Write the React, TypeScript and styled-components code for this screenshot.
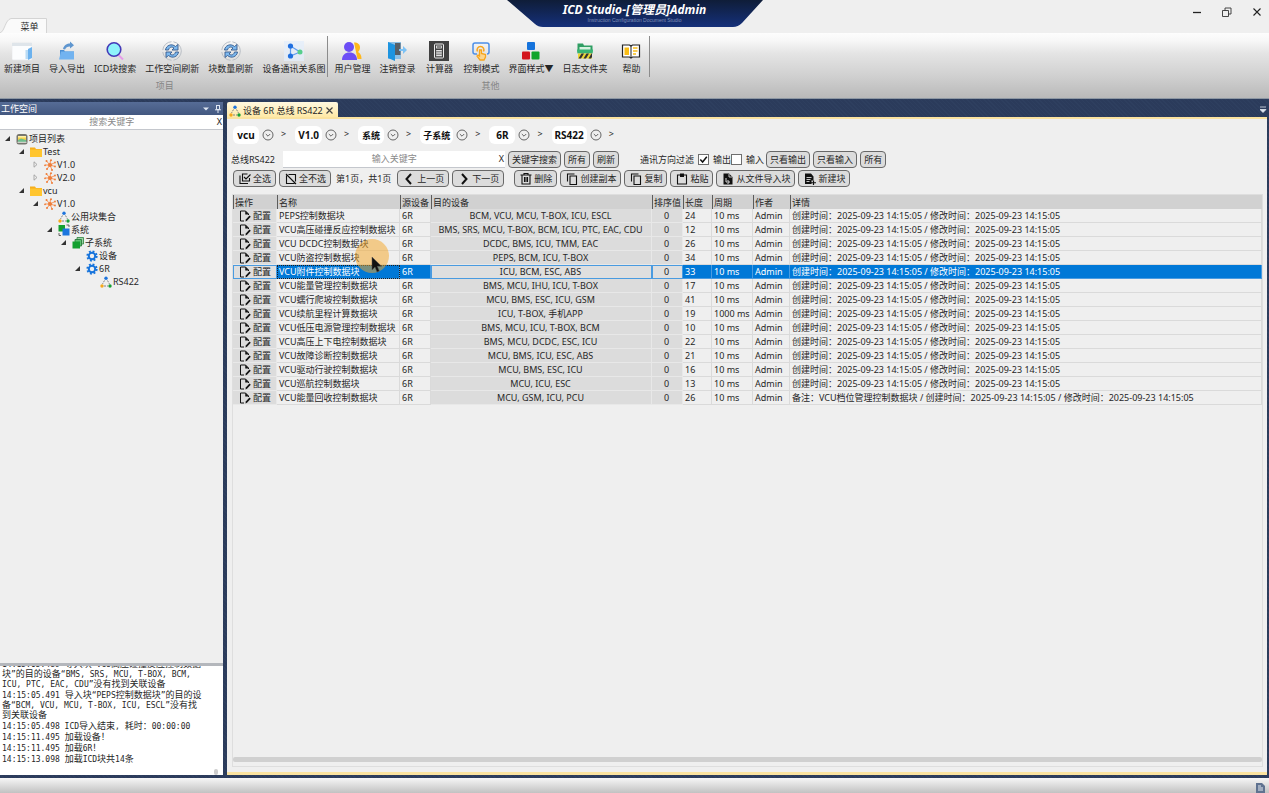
import React from 'react';
import styled, { createGlobalStyle, css } from 'styled-components';

const Global = createGlobalStyle`
  *, *::before, *::after { box-sizing: border-box; }
  body { margin: 0; }
  body, button, input, table {
    font-family: "Noto Sans", "Noto Sans CJK SC", sans-serif;
    font-size: 9px;
    line-height: 12px;
    color: #262626;
  }
  button { cursor: pointer; }
  svg { display: block; flex: none; }
`;

const Window = styled.div`
  display: flex;
  flex-direction: column;
  height: 100vh;
  overflow: hidden;
  white-space: nowrap;
  background: #2b3b5b;
`;

const PlainButton = styled.button`
  display: flex;
  align-items: center;
  justify-content: center;
  padding: 0;
  border: 0;
  background: none;
`;

/* Title bar */

const TitleBar = styled.header`
  display: grid;
  grid-template-columns: 1fr 256px 1fr;
  height: 33px;
  background: #efefef;
`;

const MenuTabs = styled.nav`
  display: flex;
  align-items: flex-end;
`;

const MenuTab = styled.button`
  position: relative;
  width: 47px;
  height: 15px;
  padding: 2px 0 0 12px;
  border: 0;
  background: none;
  svg { position: absolute; inset: 0; }
  span { position: relative; }
`;

const Banner = styled.div`
  position: relative;
  height: 28px;
  text-align: center;
  svg { position: absolute; inset: 0; }
`;

const BannerText = styled.div`
  position: relative;
  padding-top: 3px;
`;

const AppName = styled.h1`
  margin: 0;
  font-size: 12px;
  line-height: 14px;
  font-weight: 700;
  font-style: italic;
  color: #fff;
`;

const AppSubtitle = styled.p`
  margin: 0;
  font-family: "Liberation Sans", sans-serif;
  font-size: 5px;
  line-height: 6px;
  color: #7f8fb8;
`;

const WindowControls = styled.div`
  display: flex;
  justify-content: flex-end;
  gap: 10px;
  padding: 2px 2px 0 0;
  ${PlainButton} { width: 20px; height: 20px; }
`;

/* Ribbon */

const Ribbon = styled.div`
  display: flex;
  height: 66px;
  flex: none;
  border-bottom: 1px solid #8d97a3;
  background: linear-gradient(#fdfdfd 0, #f7f7f7 12%, #e4e4e4 32%, #cfcfcf 68%, #b9b9b9 100%);
`;

const RibbonGroup = styled.section`
  position: relative;
  display: flex;
  flex-direction: column;
  padding: 8px 3px 0 4px;
  & + & { padding-left: 6px; padding-right: 4px; }
  &::after {
    content: '';
    position: absolute;
    right: 0;
    top: 3px;
    height: 41px;
    width: 1px;
    background: #8c8c8c;
  }
`;

const RibbonItems = styled.div`
  display: flex;
  gap: 9px;
`;

const RibbonButton = styled(PlainButton)`
  flex-direction: column;
  gap: 2px;
  min-width: 30px;
`;

const GroupTitle = styled.div`
  margin-top: 5px;
  text-align: center;
  color: #858585;
`;

/* Docked layout */

const Dock = styled.div`
  display: flex;
  flex: 1;
  min-height: 0;
  gap: 4px;
  padding: 3px 2px 3px 0;
  background: repeating-linear-gradient(45deg, #2b3b5b 0 2px, #2e3f5f 2px 3px);
`;

const Sidebar = styled.aside`
  display: flex;
  flex-direction: column;
  width: 223px;
  flex: none;
  background: #efefef;
`;

const PanelHeader = styled.div`
  display: flex;
  align-items: center;
  gap: 6px;
  height: 13px;
  padding: 0 2px 0 1px;
  color: #fff;
  background: linear-gradient(#566c96, #435880);
  h2 { flex: 1; margin: 0; font-size: 9px; font-weight: 400; line-height: 12px; }
`;

const SearchBox = styled.div<{ $width?: number }>`
  display: flex;
  height: ${p => (p.$width ? 17 : 15)}px;
  ${p => p.$width && css`width: ${p.$width}px;`}
  padding-right: 1px;
  border-bottom: 1px solid #c4c7cd;
  background: #fff;
`;

const SearchInput = styled.input`
  flex: 1;
  min-width: 0;
  padding: 0 0 0 7px;
  border: 0;
  outline: 0;
  background: transparent;
  text-align: center;
  &::placeholder { color: #8a8a8a; opacity: 1; }
`;

const TreeList = styled.ul`
  flex: 1;
  min-height: 0;
  margin: 0;
  padding: 2px 0 0 4px;
  list-style: none;
  overflow: hidden;
`;

const TreeRow = styled.li<{ $depth: number }>`
  display: flex;
  align-items: center;
  gap: 1px;
  height: 13px;
  padding-left: ${p => p.$depth * 14}px;
`;

const Toggle = styled.span`
  width: 11px;
`;

const LogPanel = styled.div`
  display: flex;
  flex-direction: column;
  justify-content: flex-end;
  gap: 1px;
  position: relative;
  height: 112px;
  padding: 0 20px 10px 2px;
  border-top: 3px solid #b4b7bc;
  overflow: hidden;
  white-space: pre-wrap;
  background: #fff;
`;

const LogEntry = styled.p`
  margin: 0;
  flex: none;
  font-family: "DejaVu Sans Mono", "Noto Sans CJK SC", monospace;
  font-size: 8px;
  line-height: 10px;
`;

const LogThumb = styled.span`
  position: absolute;
  right: 5px;
  bottom: 0;
  width: 4px;
  height: 6px;
  border-radius: 2px;
  background: #cdcdcd;
`;

const CjkRun = styled.span`
  font-size: 9px;
  line-height: 1;
`;

/* Document area */

const DocumentArea = styled.main`
  display: flex;
  flex: 1;
  flex-direction: column;
  min-width: 0;
`;

const DocumentTabs = styled.div`
  display: flex;
  justify-content: space-between;
  height: 15px;
`;

const DocumentTab = styled.div`
  display: flex;
  align-items: center;
  gap: 2px;
  padding: 2px 4px 0 2px;
  border-radius: 2px 2px 0 0;
  background: linear-gradient(#fff8e0, #ffe9a6);
`;

const DocumentBody = styled.div`
  display: flex;
  flex: 1;
  flex-direction: column;
  min-height: 0;
  padding: 6px 4px 5px 4px;
  border: solid #fbe3a0;
  border-width: 2px 0 3px;
  background: #efefef;
`;

const Breadcrumb = styled.nav`
  display: flex;
  align-items: center;
  gap: 9px;
  height: 20px;
  padding-left: 2px;
`;

const CrumbGroup = styled.div`
  display: flex;
  align-items: center;
  gap: 3px;
  ${PlainButton} { width: 12px; height: 12px; }
`;

const Crumb = styled.a`
  min-width: 26px;
  height: 18px;
  padding: 0 3px;
  border-radius: 6px;
  background: #fff;
  color: #111;
  font-size: 10px;
  font-weight: 700;
  line-height: 18px;
  text-align: center;
  text-decoration: none;
`;

const Separator = styled.span`
  padding: 0 0 3px 4px;
`;

const FilterBar = styled.div`
  display: flex;
  align-items: center;
  gap: 3px;
  height: 17px;
  margin-top: 6px;
`;

const FieldLabel = styled.label`
  width: 49px;
`;

const ActionBar = styled(FilterBar)`
  margin-top: 2px;
  padding-left: 2px;
`;

const Button = styled.button<{ $icon?: boolean }>`
  display: flex;
  align-items: center;
  gap: 2px;
  height: 17px;
  padding: ${p => (p.$icon ? '0 4px 0 5px' : '0 3px')};
  border: 1px solid #686868;
  border-radius: 4px;
  background: #dcdcdc;
`;

const CheckGroup = styled.div`
  display: flex;
  align-items: center;
  margin: 0 -1px 0 18px;
`;

const CheckLabel = styled.label`
  display: flex;
  align-items: center;
  gap: 4px;
`;

const CheckBox = styled.input`
  appearance: none;
  width: 11px;
  height: 11px;
  margin: 0;
  border: 1px solid #6f6f6f;
  background: #fff;
  &:checked {
    background: #fff url("data:image/svg+xml,%3Csvg xmlns='http://www.w3.org/2000/svg' viewBox='0 0 9 9'%3E%3Cpath d='M1.3 4.5 3.6 7 7.8 1.8' fill='none' stroke='%23111' stroke-width='1.5'/%3E%3C/svg%3E") center / 9px;
  }
`;

const FilterTitle = styled.span`
  margin-right: 4px;
`;

const PageInfo = styled.span`
  padding: 0 3px 0 2px;
`;

const Spacer = styled.span`
  width: 4px;
`;

const GridFrame = styled.div`
  position: relative;
  display: flex;
  flex: 1;
  flex-direction: column;
  justify-content: space-between;
  min-height: 0;
  margin: 7px 0 0 1px;
  padding-bottom: 4px;
  border: 1px solid #dedede;
`;

const Grid = styled.table`
  width: 100%;
  table-layout: fixed;
  border-collapse: separate;
  border-spacing: 0;
`;

const HeadCell = styled.th`
  height: 14px;
  padding: 0 0 0 1px;
  border-left: 1px solid #5c5c5c;
  background: #d1d1d1;
  font-weight: 400;
  line-height: 13px;
  text-align: left;
`;

const Cell = styled.td<{ $box?: boolean; $center?: boolean }>`
  height: 14px;
  padding: 0 0 0 2px;
  border: solid #dadada;
  border-width: 0 1px 1px 0;
  line-height: 13px;
  overflow: hidden;
  ${p => p.$box && css`background: #dcdcdc; border-color: #e8e8e8;`}
  ${p => p.$center && css`padding: 0 1px 0 0; text-align: center;`}
`;

const GridRow = styled.tr<{ $selected?: boolean }>`
  ${p => p.$selected && css`
    ${Cell} {
      background: #0078d7;
      color: #fff;
      border-color: #4a9be0;
    }
    ${Cell}:nth-child(2) { outline: 1px dotted #1c1c1c; outline-offset: -1px; }
    ${Cell}:nth-child(1), ${Cell}:nth-child(4), ${Cell}:nth-child(5) {
      background: #dfdfdf;
      color: #1c1c1c;
      box-shadow: inset 0 1px #4a9be0, inset 1px 0 #4a9be0;
    }
    ${Cell}:nth-child(1) button { color: #1c1c1c; }
  `}
`;

const ConfigButton = styled(PlainButton)`
  gap: 2px;
  padding-left: 4px;
  line-height: 13px;
`;

const HorizontalBar = styled.div`
  height: 5px;
  border-radius: 2px;
  background: #d0d0d0;
`;

const Pointer = styled.div`
  position: absolute;
  left: 122px;
  top: 43px;
  pointer-events: none;
`;

const StatusBar = styled.footer`
  display: flex;
  align-items: flex-end;
  justify-content: flex-end;
  height: 15px;
  flex: none;
  padding: 0 3px 0 0;
  background: linear-gradient(#f6f6f6, #c2c2c2);
`;

/* Text whose ideographs are set at their own size beside the Latin letters */
const Mixed = ({ text }: { text: string }) => (
  <>
    {text.split(/([\u3000-\u9fff\uff00-\uffef]+)/).map((part, i) =>
      i % 2 ? <CjkRun key={i}>{part}</CjkRun> : part
    )}
  </>
);

/* Ribbon icons, drawn on a 20px square */
const ribbonIcons: Record<string, React.ReactNode> = {
  project: (
    <>
      <rect x="0" y="2" width="20" height="17" rx="1" fill="#fcfdfe" stroke="#e2e6ea" strokeWidth=".6" />
      <path d="M0 2h20v3H0z" fill="#dfe5ea" />
      <path d="M13.500 9h2.500v9h-2.500z" fill="#b9dbf5" />
      <path d="M16 8l4-2v11l-4 2z" fill="#6cb2ee" />
    </>
  ),
  transfer: (
    <>
      <path d="M6 8c1-4 4-5.500 7-5.500V.5l4 3.700-4 3.300V5.500c-3 0-4 1-5 3z" fill="#5f96cf" />
      <path d="M3 9h4l1 1.500h9V18H3z" fill="#4d8fd3" />
      <path d="M2 18.500l2-8h13v8z" fill="#72b3f0" />
    </>
  ),
  search: (
    <>
      <path d="M13.500 14l4.500 4.500" stroke="#e79be8" strokeWidth="2" />
      <circle cx="9" cy="8.500" r="6.800" fill="#8ff3fb" stroke="#4439b8" strokeWidth="1.600" />
    </>
  ),
  refresh: (
    <>
      <circle cx="10" cy="10" r="9.300" fill="none" stroke="#b9bec5" strokeWidth="1" strokeDasharray="13 2" />
      <path d="M3.500 9c.5-4.500 6-7 10-3.500L16 3.500V9h-6l2-2C9.500 5 7 6.500 6.500 9z" fill="#7db9ef" stroke="#355a8c" strokeWidth=".9" />
      <path d="M16.500 11c-.5 4.500-6 7-10 3.500L4 16.500V11h6l-2 2c2.500 2 5 .5 5.500-2z" fill="#7db9ef" stroke="#355a8c" strokeWidth=".9" />
    </>
  ),
  graph: (
    <>
      <rect width="20" height="20" fill="#e3edfb" opacity=".75" />
      <path d="M6.500 5v10L16 11z" fill="none" stroke="#5f9df0" strokeWidth="1.200" />
      <circle cx="6.500" cy="5" r="2.600" fill="#1f6fe0" />
      <circle cx="6.500" cy="15" r="2.600" fill="#1f6fe0" />
      <circle cx="16" cy="11" r="2.500" fill="#57cf8b" />
    </>
  ),
  users: (
    <>
      <path d="M12 1.500c4 0 6 2 6 5 0 2-1 3.500-2 4.500 2 1 3.500 3 3.500 7h-4z" fill="#ffb81c" />
      <circle cx="7" cy="6" r="5" fill="#6c4df6" />
      <path d="M0 19c0-5 3-7.500 7.500-7.500S15 14 15 19z" fill="#6c4df6" />
    </>
  ),
  logout: (
    <>
      <path d="M1 1h13v17H1z" fill="#8cc0e6" />
      <path d="M8 2h5.500v12H8z" fill="#565f67" />
      <path d="M1 1l7 3v16l-7-3z" fill="#1d94e0" />
      <path d="M12 8h4V5l4 4-4 4v-3h-4z" fill="#7cc2f5" />
    </>
  ),
  calculator: (
    <>
      <rect x="0" y="0" width="20" height="20" fill="#414141" />
      <rect x="5.500" y="3" width="9" height="14" rx="1" fill="none" stroke="#eee" />
      <rect x="7.500" y="5" width="5" height="2" fill="none" stroke="#eee" strokeWidth=".8" />
      <path d="M7.300 9.500h5.400M7.300 12h5.400M7.300 14.500h5.400M8 9v6.500M10 9v6.500M12 9v6.500" stroke="#eee" strokeWidth=".9" />
    </>
  ),
  control: (
    <>
      <path d="M6 13H4a2 2 0 0 1-2-2V4a2 2 0 0 1 2-2h12a2 2 0 0 1 2 2v7a2 2 0 0 1-2 2" fill="none" stroke="#4c8fe8" strokeWidth="1.500" />
      <path d="M6.500 10.500a3.400 3.400 0 1 1 6 0" fill="none" stroke="#f7a51c" strokeWidth="1.500" />
      <path d="M8.500 9h2v3.500l4 1V16l-1.500 3H9l-3-4 1-1 1.500 1z" fill="#fbd58f" stroke="#f7a51c" strokeWidth="1.300" />
    </>
  ),
  theme: (
    <>
      <rect x="6" y="1" width="8" height="8" rx="1" fill="#1673dc" />
      <rect x="1" y="10.500" width="8" height="8" rx="1" fill="#d3141b" />
      <rect x="10.500" y="10.500" width="8" height="8" rx="1" fill="#10a52c" />
    </>
  ),
  folder: (
    <>
      <path d="M2.500 2.500H8l1 2h8.500v7h-15z" fill="#2f9e63" />
      <path d="M4.500 6h11v3h-11z" fill="#d5f1df" />
      <path d="M2 8.500h16l-.5 4h-15z" fill="#37b573" />
      <path d="M3 12.500h14V17.500H3z" fill="#e9d532" />
      <path d="M3.500 17.500l3-5H9l-3 5zM8.500 17.500l3-5H14l-3 5zM13.500 17.500l3-5h.5v3.500l-1 1.500z" fill="#333" />
    </>
  ),
  help: (
    <>
      <path d="M1.500 4h7L10 5l1.500-1h7v12h-7l-1.500 1-1.500-1h-7z" fill="#fff" stroke="#222" strokeWidth="1.200" />
      <path d="M10 5v12" stroke="#222" strokeWidth="1" />
      <path d="M3.500 6.500h4.500v7.500H3.500z" fill="#f9bd16" />
      <path d="M12 7h4.500M12 10h4.500M12 13h3" stroke="#f9bd16" strokeWidth="1.400" />
    </>
  ),
};

/* Action icons, drawn on a 24px square and shown at 12px */
const actionIcons: Record<string, React.ReactNode> = {
  all: <path d="M2 5v16h16M17 2H7v14h14v-6M10 8l4 4 9-9" fill="none" stroke="#111" strokeWidth="2.200" />,
  none: <path d="M3 5v16h16M7 3h14v14M2 2l20 20" fill="none" stroke="#111" strokeWidth="2.200" />,
  prev: <path d="M16 2L7 12l9 10" fill="none" stroke="#111" strokeWidth="4" />,
  next: <path d="M8 2l9 10-9 10" fill="none" stroke="#111" strokeWidth="4" />,
  remove: <path d="M1 4h22M8 4V1h8v3M4 4v18h16V4M9 8v10M12 8v10M15 8v10" fill="none" stroke="#111" strokeWidth="2.200" />,
  copy: <path d="M8 6h13v17H8zM3 17V2h14" fill="none" stroke="#111" strokeWidth="2.200" />,
  paste: (
    <>
      <path d="M3 4h18v18H3z" fill="none" stroke="#111" strokeWidth="2.200" />
      <path d="M8 1h8v7H8z" fill="#111" />
    </>
  ),
  import: (
    <>
      <path d="M3 1h11l7 7v15H3z" fill="#111" />
      <path d="M14 2v6h6" fill="none" stroke="#dcdcdc" strokeWidth="1.800" />
      <path d="M8 10v8h6M11 14l4 4-4 4" fill="none" stroke="#dcdcdc" strokeWidth="2" />
    </>
  ),
  create: (
    <>
      <path d="M2 1h12l5 6v8h-4v7H2z" fill="#111" />
      <path d="M5 9h10M5 13h8M5 17h6" stroke="#dcdcdc" strokeWidth="1.800" />
      <path d="M19 15v9M14 19.500h10" stroke="#111" strokeWidth="2.400" />
    </>
  ),
  config: (
    <>
      <path d="M10 22H3V2h10l6 6v2" fill="none" stroke="#111" strokeWidth="2" />
      <path d="M12.500 1.500L20 9h-7.500z" fill="#111" />
      <path d="M13 23l.5-4 7.500-8 2.500 2.500-7.500 8z" fill="#111" />
    </>
  ),
};

const ActionIcon = ({ name }: { name: string }) => (
  <svg width="12" height="12" viewBox="0 0 24 24">{actionIcons[name]}</svg>
);

const BusShape = () => (
  <>
    <path d="M4.500 4.500L2.500 8M7.500 4.500L9.500 8M4 10h4" stroke="#777" strokeWidth=".9" strokeDasharray="2 1" />
    <circle cx="6" cy="2.300" r="1.700" fill="#1e74dc" />
    <circle cx="2" cy="10" r="1.700" fill="#f5a81c" />
    <circle cx="10" cy="10" r="1.700" fill="#15a034" />
  </>
);

/* Tree icons, drawn on a 12px square */
const treeIcons: Record<string, React.ReactNode> = {
  root: (
    <>
      <rect x=".5" y="1" width="11" height="10.500" rx="2.500" fill="#77766e" />
      <path d="M2 4h8v4.500H2z" fill="#f7d34a" />
      <path d="M2 3h8v1.500H2z" fill="#fff1a8" />
      <path d="M2 7l3-1.500L10 7v2H2z" fill="#6fbd8c" />
      <path d="M1.500 9.300h9" stroke="#e6e6df" />
    </>
  ),
  folder: (
    <>
      <path d="M0 1.500h5L6 3h6v8H0z" fill="#f6ae1b" />
      <path d="M0 3.500h12V11H0z" fill="#ffc52f" />
    </>
  ),
  version: (
    <>
      <path d="M6 6L2.500 2M6 6l.5-5M6 6l5-2.500M6 6l5 1.500M6 6L8 11M6 6l-3 4M6 6H1" stroke="#f58a4b" strokeWidth=".9" />
      <g fill="#ef7d38">
        <circle cx="6" cy="6" r="2" /><circle cx="2.500" cy="2" r="1" /><circle cx="7" cy="1.200" r="1" />
        <circle cx="11" cy="3.500" r=".9" /><circle cx="11" cy="7.500" r=".9" /><circle cx="8" cy="11" r="1" />
        <circle cx="3" cy="10" r="1" /><circle cx="1" cy="6.300" r=".9" />
      </g>
    </>
  ),
  bus: <BusShape />,
  system: (
    <>
      <path d="M.5 1h6.500v6.500H.5z" fill="#12a02f" />
      <path d="M4.500 4.500h7v7h-7z" fill="#1c76de" />
      <path d="M8.500 1h2.500v2M1 9v2.500h2" fill="none" stroke="#555" strokeWidth=".9" />
    </>
  ),
  subsystem: (
    <>
      <path d="M5 .5h6.500V7H5z" fill="#9bd3a4" stroke="#2f8040" strokeWidth=".8" />
      <path d="M3 2.500h6.500V9H3z" fill="#5fc072" stroke="#217334" strokeWidth=".8" />
      <path d="M.5 4.500H8V11.500H.5z" fill="#13a02f" />
    </>
  ),
  gear: (
    <>
      <circle cx="6" cy="6" r="3.200" fill="none" stroke="#1774dc" strokeWidth="2" />
      <circle cx="6" cy="6" r="4.700" fill="none" stroke="#1774dc" strokeWidth="1.900" strokeDasharray="1.900 1.790" />
    </>
  ),
};

const TreeIcon = ({ name }: { name: string }) => (
  <svg width="12" height="12" viewBox="0 0 12 12">{treeIcons[name]}</svg>
);

const projectTools = [
  ['project', '新建项目'], ['transfer', '导入导出'], ['search', 'ICD块搜索'],
  ['refresh', '工作空间刷新'], ['refresh', '块数量刷新'], ['graph', '设备通讯关系图'],
];
const otherTools = [
  ['users', '用户管理'], ['logout', '注销登录'], ['calculator', '计算器'], ['control', '控制模式'],
  ['theme', '界面样式▼'], ['folder', '日志文件夹'], ['help', '帮助'],
];

const tree: [number, 'open' | 'closed' | '', string, string][] = [
  [0, 'open', 'root', '项目列表'],
  [1, 'open', 'folder', 'Test'],
  [2, 'closed', 'version', 'V1.0'],
  [2, 'closed', 'version', 'V2.0'],
  [1, 'open', 'folder', 'vcu'],
  [2, 'open', 'version', 'V1.0'],
  [3, '', 'bus', '公用块集合'],
  [3, 'open', 'system', '系统'],
  [4, 'open', 'subsystem', '子系统'],
  [5, '', 'gear', '设备'],
  [5, 'open', 'gear', '6R'],
  [6, '', 'bus', 'RS422'],
];

const log = [
  '14:15:05.489 导入块“VCU高压碰撞反应控制数据块”的目的设备“BMS, SRS, MCU, T-BOX, BCM, ICU, PTC, EAC, CDU”没有找到关联设备',
  '14:15:05.491 导入块“PEPS控制数据块”的目的设备“BCM, VCU, MCU, T-BOX, ICU, ESCL”没有找到关联设备',
  '14:15:05.498 ICD导入结束, 耗时：00:00:00',
  '14:15:11.495 加载设备！',
  '14:15:11.495 加载6R！',
  '14:15:13.098 加载ICD块共14条',
];

const crumbs = ['vcu', 'V1.0', '系统', '子系统', '6R', 'RS422'];

const columns: [string, number?][] = [
  ['操作', 44], ['名称', 123], ['源设备', 31], ['目的设备', 221], ['排序值', 31],
  ['长度', 29], ['周期', 41], ['作者', 37], ['详情'],
];

const times = '创建时间：2025-09-23 14:15:05 / 修改时间：2025-09-23 14:15:05';

const blocks: [string, string, number, string?, string?][] = [
  ['PEPS控制数据块', 'BCM, VCU, MCU, T-BOX, ICU, ESCL', 24],
  ['VCU高压碰撞反应控制数据块', 'BMS, SRS, MCU, T-BOX, BCM, ICU, PTC, EAC, CDU', 12],
  ['VCU DCDC控制数据块', 'DCDC, BMS, ICU, TMM, EAC', 26],
  ['VCU防盗控制数据块', 'PEPS, BCM, ICU, T-BOX', 34],
  ['VCU附件控制数据块', 'ICU, BCM, ESC, ABS', 33],
  ['VCU能量管理控制数据块', 'BMS, MCU, IHU, ICU, T-BOX', 17],
  ['VCU蠕行爬坡控制数据块', 'MCU, BMS, ESC, ICU, GSM', 41],
  ['VCU续航里程计算数据块', 'ICU, T-BOX, 手机APP', 19, '1000 ms'],
  ['VCU低压电源管理控制数据块', 'BMS, MCU, ICU, T-BOX, BCM', 10],
  ['VCU高压上下电控制数据块', 'BMS, MCU, DCDC, ESC, ICU', 22],
  ['VCU故障诊断控制数据块', 'MCU, BMS, ICU, ESC, ABS', 21],
  ['VCU驱动行驶控制数据块', 'MCU, BMS, ESC, ICU', 16],
  ['VCU巡航控制数据块', 'MCU, ICU, ESC', 13],
  ['VCU能量回收控制数据块', 'MCU, GSM, ICU, PCU', 26, undefined, '备注：VCU档位管理控制数据块 / '],
];

const ToolGroup = ({ title, tools }: { title: string; tools: string[][] }) => (
  <RibbonGroup>
    <RibbonItems>
      {tools.map(([icon, label]) => (
        <RibbonButton key={label}>
          <svg width="20" height="20" viewBox="0 0 20 20">{ribbonIcons[icon]}</svg>
          {label}
        </RibbonButton>
      ))}
    </RibbonItems>
    <GroupTitle>{title}</GroupTitle>
  </RibbonGroup>
);

const Action = ({ icon, label }: { icon: string; label: string }) => (
  <Button $icon><ActionIcon name={icon} />{label}</Button>
);

export default function App() {
  return (
    <Window>
      <Global />
      <TitleBar>
        <MenuTabs>
          <MenuTab>
            <svg width="47" height="15" viewBox="0 0 47 15">
              <path d="M0 15C5 13 5 2 11 .5H46.500V15" fill="#fafafa" stroke="#d4d4d4" />
            </svg>
            <span>菜单</span>
          </MenuTab>
        </MenuTabs>
        <Banner>
          <svg width="256" height="28" viewBox="0 0 256 28">
            <defs>
              <linearGradient id="banner" x2="0" y2="1">
                <stop offset="0" stopColor="#0f1d38" />
                <stop offset="1" stopColor="#15307a" />
              </linearGradient>
            </defs>
            <path d="M0 0h256l-21 23q-4 4-9 4H36q-5 0-8-3z" fill="url(#banner)" />
          </svg>
          <BannerText>
            <AppName>ICD Studio-[管理员]Admin</AppName>
            <AppSubtitle>Instruction Configuration Document Studio</AppSubtitle>
          </BannerText>
        </Banner>
        <WindowControls>
          <PlainButton aria-label="最小化">
            <svg width="10" height="10"><path d="M1 5.500h8" stroke="#222" strokeWidth="1.300" /></svg>
          </PlainButton>
          <PlainButton aria-label="还原">
            <svg width="10" height="10"><path d="M.5 3.500h6v6h-6zM3 3.500v-2.500h6v6h-2.500" fill="none" stroke="#333" strokeWidth=".9" /></svg>
          </PlainButton>
          <PlainButton aria-label="关闭">
            <svg width="10" height="10"><path d="M1.500 1.500l7 7M8.500 1.500l-7 7" stroke="#222" strokeWidth="1.100" /></svg>
          </PlainButton>
        </WindowControls>
      </TitleBar>

      <Ribbon>
        <ToolGroup title="项目" tools={projectTools} />
        <ToolGroup title="其他" tools={otherTools} />
      </Ribbon>

      <Dock>
        <Sidebar>
          <PanelHeader>
            <h2>工作空间</h2>
            <PlainButton aria-label="面板菜单">
              <svg width="6" height="6"><path d="M0 1.500h6l-3 3z" fill="#dfe6f2" /></svg>
            </PlainButton>
            <PlainButton aria-label="固定">
              <svg width="6" height="8"><path d="M1.500 0v4.500h3V0M0 4.800h6M3 5v3M1.500.5h3" fill="none" stroke="#dfe6f2" /></svg>
            </PlainButton>
          </PanelHeader>
          <SearchBox>
            <SearchInput aria-label="搜索关键字" placeholder="搜索关键字" />
            <PlainButton aria-label="清除">X</PlainButton>
          </SearchBox>
          <TreeList>
            {tree.map(([depth, state, icon, label], i) => (
              <TreeRow key={i} $depth={depth}>
                <Toggle>
                  {state && (
                    <svg width="7" height="7">
                      {state === 'open'
                        ? <path d="M6 1v5H1z" fill="#333" />
                        : <path d="M2 .8v5.400l3-2.700z" fill="none" stroke="#999" strokeWidth=".8" />}
                    </svg>
                  )}
                </Toggle>
                <TreeIcon name={icon} />
                {label}
              </TreeRow>
            ))}
          </TreeList>
          <LogPanel>
            {log.map(line => <LogEntry key={line}><Mixed text={line} /></LogEntry>)}
            <LogThumb />
          </LogPanel>
        </Sidebar>

        <DocumentArea>
          <DocumentTabs>
            <DocumentTab>
              <TreeIcon name="bus" />
              设备 6R 总线 RS422
              <PlainButton aria-label="关闭标签">
                <svg width="9" height="9"><path d="M1.500 1.500l6 6M7.500 1.500l-6 6" stroke="#444" strokeWidth="1.200" /></svg>
              </PlainButton>
            </DocumentTab>
            <PlainButton aria-label="标签列表">
              <svg width="7" height="7"><path d="M0 1h6M0 3.500h6l-3 3z" fill="#e1e7f0" stroke="#e1e7f0" strokeWidth=".8" /></svg>
            </PlainButton>
          </DocumentTabs>

          <DocumentBody>
            <Breadcrumb>
              {crumbs.map(name => (
                <CrumbGroup key={name}>
                  <Crumb href="#"><Mixed text={name} /></Crumb>
                  <PlainButton aria-label={name}>
                    <svg width="12" height="12" viewBox="0 0 12 12" fill="none" stroke="#666">
                      <circle cx="6" cy="6" r="5" /><path d="M3.800 5L6 7.200 8.200 5" />
                    </svg>
                  </PlainButton>
                  <Separator>&gt;</Separator>
                </CrumbGroup>
              ))}
            </Breadcrumb>

            <FilterBar>
              <FieldLabel htmlFor="keyword">总线RS422</FieldLabel>
              <SearchBox $width={222}>
                <SearchInput id="keyword" placeholder="输入关键字" />
                <PlainButton aria-label="清除">X</PlainButton>
              </SearchBox>
              <Button>关键字搜索</Button>
              <Button>所有</Button>
              <Button>刷新</Button>
              <CheckGroup>
                <FilterTitle>通讯方向过滤</FilterTitle>
                <CheckLabel><CheckBox type="checkbox" defaultChecked />输出</CheckLabel>
                <CheckLabel><CheckBox type="checkbox" />输入</CheckLabel>
              </CheckGroup>
              <Button>只看输出</Button>
              <Button>只看输入</Button>
              <Button>所有</Button>
            </FilterBar>

            <ActionBar>
              <Action icon="all" label="全选" />
              <Action icon="none" label="全不选" />
              <PageInfo>第1页，共1页</PageInfo>
              <Action icon="prev" label="上一页" />
              <Action icon="next" label="下一页" />
              <Spacer />
              <Action icon="remove" label="删除" />
              <Action icon="copy" label="创建副本" />
              <Action icon="copy" label="复制" />
              <Action icon="paste" label="粘贴" />
              <Action icon="import" label="从文件导入块" />
              <Action icon="create" label="新建块" />
            </ActionBar>

            <GridFrame>
              <Grid>
                <colgroup>
                  {columns.map(([name, width]) => <col key={name} width={width} />)}
                </colgroup>
                <thead>
                  <tr>{columns.map(([name]) => <HeadCell key={name}>{name}</HeadCell>)}</tr>
                </thead>
                <tbody>
                  {blocks.map(([name, targets, length, period = '10 ms', note = ''], i) => (
                    <GridRow key={name} $selected={i === 4}>
                      <Cell $box><ConfigButton><ActionIcon name="config" />配置</ConfigButton></Cell>
                      <Cell>{name}</Cell>
                      <Cell>6R</Cell>
                      <Cell $box $center>{targets}</Cell>
                      <Cell $box $center>0</Cell>
                      <Cell>{length}</Cell>
                      <Cell>{period}</Cell>
                      <Cell>Admin</Cell>
                      <Cell>{note}{times}</Cell>
                    </GridRow>
                  ))}
                </tbody>
              </Grid>
              <HorizontalBar />
              <Pointer>
                <svg width="36" height="36" viewBox="0 0 36 36">
                  <circle cx="17" cy="18" r="17" fill="#f5a623" opacity=".5" />
                  <path d="M17 19v13l3-3 2 5 2.300-1-2-4.700h4.200z" fill="#111" stroke="#555" strokeWidth=".5" />
                </svg>
              </Pointer>
            </GridFrame>
          </DocumentBody>
        </DocumentArea>
      </Dock>

      <StatusBar>
        <svg width="11" height="11" viewBox="0 0 11 11">
          <path d="M1 1h6l3 3v7H1z" fill="#5f7290" />
          <path d="M3 4h3M3 6h5M3 8h5" stroke="#e6eaf0" />
        </svg>
      </StatusBar>
    </Window>
  );
}
